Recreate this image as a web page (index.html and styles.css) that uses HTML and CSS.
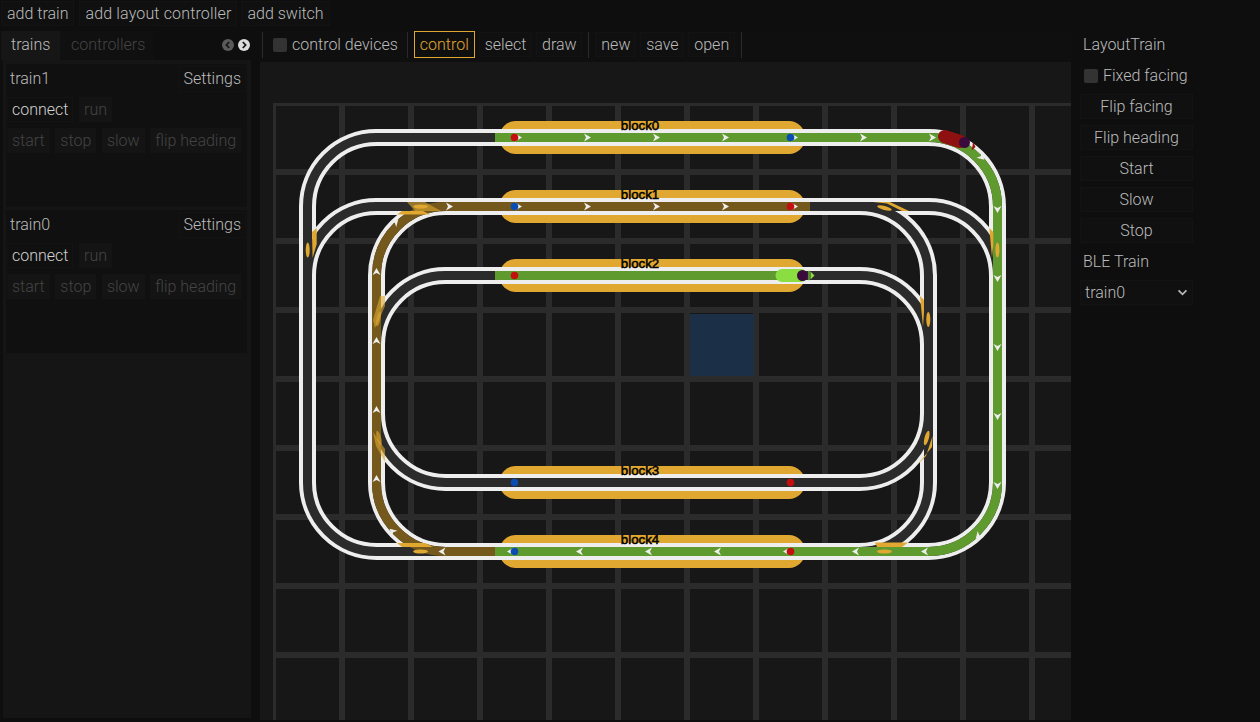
FILE: index.html
```html
<!DOCTYPE html>
<html lang="en">
<head>
<meta charset="utf-8">
<title>Layout</title>
<link rel="stylesheet" href="styles.css">
</head>
<body>
<div class="app">
  <nav class="menubar">
    <button class="btn">add train</button>
    <button class="btn btn-loose">add layout controller</button>
    <button class="btn">add switch</button>
  </nav>
  <div class="main">
    <aside class="left">
      <div class="tabs">
        <div class="tab tab-active">trains</div>
        <div class="tab">controllers</div>
        <div class="tab-arrows">
          <svg class="tab-arrow" viewBox="0 0 12 12"><circle cx="6" cy="6" r="6" fill="#5a5a5a"/><path d="M7.2 3 4.4 6l2.8 3" fill="none" stroke="#161616" stroke-width="1.8"/></svg>
          <svg class="tab-arrow" viewBox="0 0 12 12"><circle cx="6" cy="6" r="6" fill="#dcdcdc"/><path d="M4.8 3 7.6 6 4.8 9" fill="none" stroke="#161616" stroke-width="1.8"/></svg>
        </div>
      </div>
      <div class="panel">
        <section class="card">
          <div class="card-head"><span class="card-title">train1</span><button class="btn btn-set">Settings</button></div>
          <div class="card-row card-row-first"><button class="btn btn-strong">connect</button><button class="btn btn-off">run</button></div>
          <div class="card-row"><button class="btn btn-off">start</button><button class="btn btn-off">stop</button><button class="btn btn-off">slow</button><button class="btn btn-off">flip heading</button></div>
        </section>
        <section class="card">
          <div class="card-head"><span class="card-title">train0</span><button class="btn btn-set">Settings</button></div>
          <div class="card-row card-row-first"><button class="btn btn-strong">connect</button><button class="btn btn-off">run</button></div>
          <div class="card-row"><button class="btn btn-off">start</button><button class="btn btn-off">stop</button><button class="btn btn-off">slow</button><button class="btn btn-off">flip heading</button></div>
        </section>
      </div>
    </aside>
    <div class="center">
      <div class="toolbar">
        <span class="sep"></span>
        <label class="check check-tool"><span class="box"></span>control devices</label>
        <span class="sep"></span>
        <button class="btn btn-on">control</button>
        <button class="btn">select</button>
        <button class="btn">draw</button>
        <span class="sep"></span>
        <button class="btn">new</button>
        <button class="btn">save</button>
        <button class="btn">open</button>
        <span class="sep"></span>
      </div>
      <svg class="canvas" viewBox="260 62 811 658" width="811" height="658">
        <defs>
          <pattern id="grid" x="273" y="103" width="69" height="69" patternUnits="userSpaceOnUse">
            <path d="M0 0H69V3H0ZM0 65.500H69V69H0ZM0 0H3V69H0ZM66 0H69V69H66Z" fill="#2b2b2b" shape-rendering="crispEdges"/>
          </pattern>
          <path id="ar" d="M4 0-3-4-1 0-3 4Z" fill="#eee"/>
          <path id="tracks" d="M376.5 137.5H928.5A69 69 0 0 1 997.5 206.5V482.5A69 69 0 0 1 928.5 551.5H376.5A69 69 0 0 1 307.5 482.5V206.5A69 69 0 0 1 376.5 137.5ZM307.5 275.5A69 69 0 0 1 376.5 206.5H928.5A69 69 0 0 1 997.5 275.5M445.5 206.5A69 69 0 0 0 376.5 275.5V482.5A69 69 0 0 0 445.5 551.5M859.5 206.5A69 69 0 0 1 928.5 275.5V482.5A69 69 0 0 1 859.5 551.5M376.5 344.5A69 69 0 0 1 445.5 275.5H859.5A69 69 0 0 1 928.5 344.5V413.5A69 69 0 0 1 859.5 482.5H445.5A69 69 0 0 1 376.5 413.5"/>
        </defs>
        <rect class="grid" x="273" y="103" width="798" height="617"/>
        <rect class="tile" x="690" y="314" width="64" height="62"/>

        <g class="pills">
          <rect x="499.5" y="121" width="305.5" height="33" rx="16"/>
          <rect x="499.5" y="190" width="305.5" height="33" rx="16"/>
          <rect x="499.5" y="259" width="305.5" height="33" rx="16"/>
          <rect x="499.5" y="466" width="305.5" height="33" rx="16"/>
          <rect x="499.5" y="535" width="305.5" height="33" rx="16"/>
        </g>

        <use href="#tracks" class="rail"/>
        <use href="#tracks" class="bed"/>
        <path class="live-green" d="M495 137.5H928.5A69 69 0 0 1 997.5 206.5V482.5A69 69 0 0 1 928.5 551.5H495M495 275.5H785"/>
        <path class="live-brown" d="M495 551.5H445.5A69 69 0 0 1 376.5 482.5V275.5A69 69 0 0 1 445.5 206.5H810"/>

        <g class="gold">
          <path d="M312 232 316.700 228V244L312.600 258Z"/>
          <ellipse cx="307.700" cy="250" rx="2" ry="7.500"/>
          <path d="M989.300 228 993.300 232V244L992 258Z"/>
          <ellipse cx="997.400" cy="250" rx="2" ry="7.500"/>
          <path d="M920 296 924 300V312L923 327Z"/>
          <ellipse cx="928.300" cy="319.500" rx="2" ry="7.500"/>
          <path class="gold-soft" d="M380 296 385 296V306L379 320 375 328 373 320Z"/>
          <ellipse class="gold-soft" cx="378.500" cy="319" rx="2" ry="7.500" transform="rotate(12 378.500 319)"/>
          <path d="M397 214.500 402 211H423L430 214.500Z"/>
          <path class="gold-soft" d="M407 202H425L441 211H415Z"/>
          <ellipse cx="420.500" cy="206.500" rx="7.500" ry="2"/>
          <path d="M873 202H890L909 211H902L887 203.500Z"/>
          <ellipse cx="884.500" cy="208" rx="7.500" ry="2" transform="rotate(15 884.500 208)"/>
          <path d="M397 543H425L433 547H402Z"/>
          <ellipse cx="420.500" cy="551.500" rx="7.500" ry="2"/>
          <path d="M875 542.500H908L902 547H877Z"/>
          <ellipse cx="884.500" cy="551.500" rx="7.500" ry="2"/>
          <path class="gold-soft" d="M373 432 385 449 385 462 376 446Z"/>
          <ellipse class="gold-soft" cx="379" cy="438" rx="2.200" ry="7.500" transform="rotate(-15 379 438)"/>
          <path d="M932 447 917 465 926 456 932.500 436Z"/>
          <ellipse cx="926.700" cy="438" rx="2.200" ry="7.500" transform="rotate(15 926.700 438)"/>
        </g>

        <g class="arrows">
          <use href="#ar" transform="translate(518 137.5)"/>
          <use href="#ar" transform="translate(587 137.5)"/>
          <use href="#ar" transform="translate(656 137.5)"/>
          <use href="#ar" transform="translate(725 137.5)"/>
          <use href="#ar" transform="translate(794 137.5)"/>
          <use href="#ar" transform="translate(863 137.5)"/>
          <use href="#ar" transform="translate(932 137.5)"/>
          <use href="#ar" transform="translate(981.5 157) rotate(45)"/>
          <use href="#ar" transform="translate(997.5 209) rotate(90)"/>
          <use href="#ar" transform="translate(997.5 278) rotate(90)"/>
          <use href="#ar" transform="translate(997.5 347) rotate(90)"/>
          <use href="#ar" transform="translate(997.5 416) rotate(90)"/>
          <use href="#ar" transform="translate(997.5 485) rotate(90)"/>
          <use href="#ar" transform="translate(978.5 536) rotate(135)"/>
          <use href="#ar" transform="translate(925 551.5) rotate(180)"/>
          <use href="#ar" transform="translate(856 551.5) rotate(180)"/>
          <use href="#ar" transform="translate(787 551.5) rotate(180)"/>
          <use href="#ar" transform="translate(718 551.5) rotate(180)"/>
          <use href="#ar" transform="translate(649 551.5) rotate(180)"/>
          <use href="#ar" transform="translate(580 551.5) rotate(180)"/>
          <use href="#ar" transform="translate(511 551.5) rotate(180)"/>
          <use href="#ar" transform="translate(442.5 551.5) rotate(180)"/>
          <use href="#ar" transform="translate(392.5 531.5) rotate(-135)"/>
          <use href="#ar" transform="translate(376.5 479) rotate(-90)"/>
          <use href="#ar" transform="translate(376.5 410) rotate(-90)"/>
          <use href="#ar" transform="translate(376.5 341) rotate(-90)"/>
          <use href="#ar" transform="translate(376.5 272) rotate(-90)"/>
          <use href="#ar" transform="translate(395.5 222) rotate(-45)"/>
          <use href="#ar" transform="translate(449 206.5)"/>
          <use href="#ar" transform="translate(518 206.5)"/>
          <use href="#ar" transform="translate(587 206.5)"/>
          <use href="#ar" transform="translate(656 206.5)"/>
          <use href="#ar" transform="translate(725 206.5)"/>
          <use href="#ar" transform="translate(794 206.5)"/>
        </g>

        <g class="dot-red">
          <circle cx="514.5" cy="137.5" r="3.8"/>
          <circle cx="790.5" cy="206.5" r="3.8"/>
          <circle cx="514.5" cy="275.5" r="3.8"/>
          <circle cx="790.5" cy="482.5" r="3.8"/>
          <circle cx="790.5" cy="551.5" r="3.8"/>
        </g>
        <g class="dot-blue">
          <circle cx="790.5" cy="137.5" r="3.8"/>
          <circle cx="514.5" cy="206.5" r="3.8"/>
          <circle cx="514.5" cy="482.5" r="3.8"/>
          <circle cx="514.5" cy="551.5" r="3.8"/>
        </g>

        <g class="labels">
          <text x="640" y="130">block0</text>
          <text x="640" y="199">block1</text>
          <text x="640" y="268">block2</text>
          <text x="640" y="475">block3</text>
          <text x="640" y="544">block4</text>
        </g>

        <path class="train-light" d="M782 275.5H801"/>
        <circle class="train-eye" cx="802.500" cy="275.500" r="5.500"/>
        <path class="train-light-tip" d="M810.500 271.500 814.500 275.500 810.500 279.500Z"/>
        <path class="train-light-line" d="M809 270.500V280.500"/>

        <path class="train-red" d="M944.500 136.500 960 141.500"/>
        <circle class="train-eye" cx="964.500" cy="142.500" r="5.500"/>
        <path class="train-red-tip" d="M973 141.500 975.500 147 971.500 150.500 972.500 146Z"/>
      </svg>
    </div>
    <aside class="right">
      <div class="right-title">LayoutTrain</div>
      <label class="check check-side"><span class="box"></span>Fixed facing</label>
      <button class="btn btn-wide">Flip facing</button>
      <button class="btn btn-wide">Flip heading</button>
      <button class="btn btn-wide">Start</button>
      <button class="btn btn-wide">Slow</button>
      <button class="btn btn-wide">Stop</button>
      <div class="right-title">BLE Train</div>
      <div class="select"><span>train0</span>
        <svg class="select-arrow" viewBox="0 0 12 8"><path d="M1.500 1.500 6 6l4.500-4.500" fill="none" stroke="#b8b8b8" stroke-width="2"/></svg>
      </div>
    </aside>
  </div>
</div>
</body>
</html>
```
FILE: styles.css
```css
* { box-sizing: border-box; }
html, body { margin: 0; padding: 0; height: 100%; overflow: hidden; background: #0e0e0e; }
body { font-family: Roboto, "Liberation Sans", sans-serif; font-weight: 300; font-size: 16px; color: #bcbcbc; }

.app { width: 1260px; height: 722px; display: flex; flex-direction: column; }

.btn {
  font: inherit; color: inherit; background: #101010; border: 0; margin: 0;
  box-shadow: inset 0 0 0 1px #131313;
  height: 25px; padding: 0 5px; white-space: nowrap; display: flex; align-items: center; justify-content: center;
}

.menubar { height: 31px; padding: 1px 0 0 1px; display: flex; gap: 4px; align-items: flex-start; background: #0e0e0e; }
.menubar .btn { height: 25px; padding: 0 6px; }
.menubar .btn-loose { letter-spacing: .15px; margin-left: 1px; }

.main { display: flex; height: 689px; }

.left { width: 260px; display: flex; flex-direction: column; background: #0e0e0e; }
.tabs { height: 29px; display: flex; align-items: stretch; padding-left: 1px; }
.tab { width: 94px; padding: 0 0 2px 11px; display: flex; align-items: center; color: #444; background: #101010; }
.tab-active { width: 59px; padding-left: 10px; color: #bcbcbc; background: #161616; }
.tab-arrows { margin-left: auto; padding: 0 10px 2px 0; display: flex; align-items: center; gap: 4px; }
.tab-arrow { width: 12px; height: 12px; display: block; }

.panel { width: 248px; margin-left: 3px; height: 658px; background: #151515; padding: 4px 4px 0 3px; display: flex; flex-direction: column; gap: 3px; }
.card { height: 143px; background: #101010; padding: 0 1px; display: flex; flex-direction: column; }
.card-head { display: flex; justify-content: space-between; align-items: center; height: 29px; }
.card-title { padding-left: 3px; }
.btn-set { height: 26px; }
.card-row { display: flex; gap: 5.6px; margin-top: 6px; }
.card-row-first { margin-top: 4px; }
.btn-strong { color: #d2d2d2; }
.btn-off { color: #444; background: #141414; box-shadow: none; }

.center { width: 811px; display: flex; flex-direction: column; }
.toolbar { height: 31px; padding-bottom: 4px; display: flex; align-items: center; gap: 4px; background: #0f0f0f; }
.toolbar .btn { padding: 0 5.85px; }
.sep { width: 1px; height: 26px; background: #2a2a2a; margin: 0 2px; flex: none; }
.check { display: flex; align-items: center; gap: 5px; }
.check-tool { margin: 0 3px 0 4px; }
.box { width: 14px; height: 14px; border-radius: 2px; background: #333; flex: none; }
.toolbar .btn-on { height: 27px; padding: 0 5px; box-shadow: none; border: 1px solid #e0a830; color: #e0a830; background: #0f0f0f; }

.canvas { display: block; background: #171717; }
.grid { fill: url(#grid); }
.tile { fill: #1b3046; }
.pills rect { fill: #e0a830; }
.rail { fill: none; stroke: #eee; stroke-width: 17; }
.bed { fill: none; stroke: #2b2b2b; stroke-width: 9; }
.live-green { fill: none; stroke: #5f9a2f; stroke-width: 9; }
.live-brown { fill: none; stroke: #75581c; stroke-width: 9; }
.gold { fill: #e0a830; }
.gold-soft { opacity: .6; }
.dot-red { fill: #c40f0f; }
.dot-blue { fill: #0a4db0; }
.labels text { font-family: "Liberation Sans", Arial, sans-serif; font-size: 13.3px; font-weight: 400; fill: #000; stroke: #000; stroke-width: .5px; text-anchor: middle; }
.train-light { fill: none; stroke: #8ade42; stroke-width: 13; stroke-linecap: round; }
.train-light-tip { fill: #8ade42; }
.train-light-line { fill: none; stroke: #8ade42; stroke-width: 1; }
.train-eye { fill: #3a0a3c; }
.train-red { fill: none; stroke: #8f1010; stroke-width: 13; stroke-linecap: round; }
.train-red-tip { fill: #a01010; }

.right { flex: 1; padding: 1px 0 0 9px; display: flex; flex-direction: column; gap: 6px; background: #0e0e0e; align-items: flex-start; }
.right-title { height: 25px; padding-left: 3px; display: flex; align-items: center; }
.check-side { height: 25px; padding-left: 4px; }
.btn-wide { width: 113px; }
.select { width: 113px; height: 25px; background: #101010; box-shadow: inset 0 0 0 1px #131313; display: flex; align-items: center; justify-content: space-between; padding: 0 5px; }
.select-arrow { width: 11px; height: 7px; display: block; }
```
